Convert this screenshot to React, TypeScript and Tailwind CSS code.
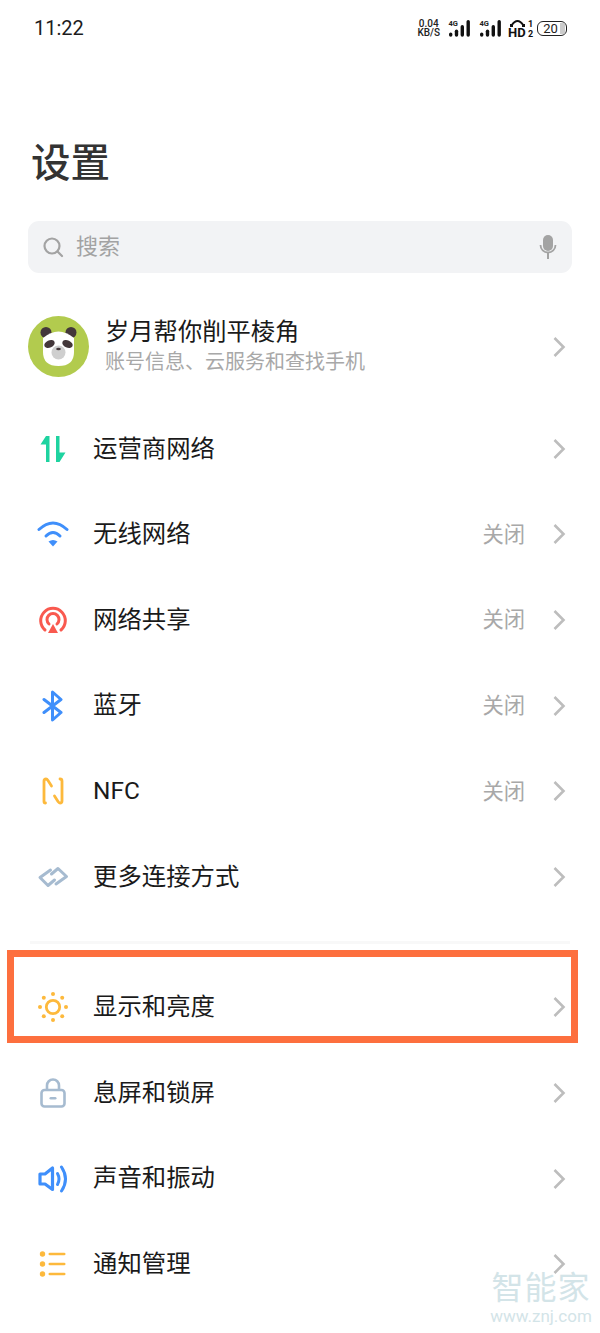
import React from "react";

const cjk = { fontFamily: '"Roboto","Noto Sans CJK SC",sans-serif' };

function Chevron() {
  return (
    <svg width="14" height="22" viewBox="0 0 14 22" fill="none" className="shrink-0">
      <path d="M2.5 2 L11.5 11 L2.5 20" stroke="#bdbdbd" strokeWidth="2.6" />
    </svg>
  );
}

function Bars() {
  return (
    <svg width="24" height="20" viewBox="0 0 24 20" className="shrink-0">
      <text x="0.5" y="8" fontSize="7.5" fontWeight="700" fontFamily="Roboto,sans-serif" fill="#222">4G</text>
      <rect x="1" y="14.5" width="3.4" height="4.2" rx="1.7" fill="#111" />
      <rect x="6.8" y="11.5" width="3.4" height="7.2" rx="1.7" fill="#111" />
      <rect x="12.6" y="7" width="3.4" height="11.7" rx="1.7" fill="#111" />
      <rect x="18.5" y="2" width="3.4" height="16.7" rx="1.7" fill="#111" />
    </svg>
  );
}

function StatusBar() {
  return (
    <div className="flex h-[56px] items-center justify-between pl-[34px] pr-[33px]">
      <span className="text-[20px] text-[#1c1c1c]" style={{ fontFamily: "Roboto,sans-serif", fontWeight: 450 }}>11:22</span>
      <div className="flex items-center" style={{ fontFamily: "Roboto,sans-serif" }}>
        <div className="mr-[8px] flex flex-col items-center text-[10px] font-medium leading-[9.5px] text-[#222]">
          <span>0.04</span>
          <span>KB/S</span>
        </div>
        <Bars />
        <div className="w-[7px]" />
        <Bars />
        <div className="w-[5px]" />
        <svg width="26" height="20" viewBox="0 0 26 20" className="shrink-0">
          <path d="M3.5 7.5 Q9.5 -1.5 15.5 7.5" fill="none" stroke="#111" strokeWidth="2" />
          <rect x="2" y="6" width="3" height="3" fill="#111" />
          <rect x="14" y="6" width="3" height="3" fill="#111" />
          <text x="0" y="18.5" fontSize="13" fontWeight="700" fontFamily="Roboto,sans-serif" fill="#111">HD</text>
          <text x="20" y="9" fontSize="9" fontWeight="700" fontFamily="Roboto,sans-serif" fill="#111">1</text>
          <text x="20" y="18.5" fontSize="9" fontWeight="700" fontFamily="Roboto,sans-serif" fill="#111">2</text>
        </svg>
        <div className="relative ml-[3px] flex h-[15px] w-[30px] items-center justify-center overflow-hidden rounded-[6px] border border-[#222] pr-[3px] text-[13px] leading-none text-[#222]">
          <div className="absolute right-[1px] top-[1px] bottom-[1px] w-[5px] bg-[#ccc]" />
          <span className="relative">20</span>
        </div>
      </div>
    </div>
  );
}

const icons: Record<string, React.ReactNode> = {
  net: (
    <svg width="30" height="30" viewBox="0 0 30 30" className="shrink-0">
      <path d="M8 2 L11.5 2 L11.5 28 L8 28 Z M8 2 L2.5 10.5 L8 10.5 Z" fill="#1ed3a0" />
      <path d="M18 2 L21.5 2 L21.5 28 L18 28 Z M21.5 28 L27.5 18.5 L21.5 18.5 Z" fill="#1ed3a0" />
    </svg>
  ),
  wifi: (
    <svg width="32" height="30" viewBox="0 0 32 30" fill="none" className="shrink-0">
      <path d="M2 10.5 Q16 -2.5 30 10.5" stroke="#3f8ffb" strokeWidth="3" strokeLinecap="round" />
      <path d="M9 17 Q16 10 23 17" stroke="#3f8ffb" strokeWidth="3" strokeLinecap="round" />
      <path d="M11.5 22.5 Q16 19.5 20.5 22.5 L16 27.5 Z" fill="#3f8ffb" />
    </svg>
  ),
  share: (
    <svg width="30" height="30" viewBox="0 0 30 30" fill="none" className="shrink-0">
      <path d="M7 25 A12.3 12.3 0 1 1 23 25" stroke="#f9594f" strokeWidth="3" strokeLinecap="round" />
      <path d="M11 19 A6 6 0 1 1 19 19" stroke="#f9594f" strokeWidth="3" strokeLinecap="round" />
      <path d="M15 19 L20 28 L10 28 Z" fill="#f9594f" />
    </svg>
  ),
  bt: (
    <svg width="30" height="32" viewBox="0 0 30 32" fill="none" className="shrink-0">
      <path d="M6 9.5 L23 22.5 L14.5 30 L14.5 2 L23 9.5 L6 22.5" stroke="#3f8ffb" strokeWidth="3" strokeLinecap="round" strokeLinejoin="round" />
    </svg>
  ),
  nfc: (
    <svg width="30" height="30" viewBox="0 0 30 30" fill="none" className="shrink-0">
      <path d="M7.5 27 Q6 27 6 25.5 L6 5 Q6 3 8 3 Q9 3 10 4.5 L13.5 10" stroke="#fdb93c" strokeWidth="2.8" strokeLinecap="round" strokeLinejoin="round" />
      <path d="M22 3 Q24 3 24 5 L24 25 Q24 27 22 27 Q21 27 20 25.5 L16.5 20" stroke="#fdb93c" strokeWidth="2.8" strokeLinecap="round" strokeLinejoin="round" />
    </svg>
  ),
  link: (
    <svg width="32" height="30" viewBox="0 0 32 30" fill="none" className="shrink-0">
      <path d="M13.5 8 L3 15.5 L11 23.5 L17.5 18" stroke="#a6bbd0" strokeWidth="3" strokeLinecap="round" strokeLinejoin="round" />
      <path d="M14.5 12 L21 6.5 L29.5 14.5 L19 22" stroke="#a6bbd0" strokeWidth="3" strokeLinecap="round" strokeLinejoin="round" />
    </svg>
  ),
  sun: (
    <svg width="30" height="30" viewBox="0 0 30 30" fill="none" className="shrink-0">
      <circle cx="15" cy="15" r="6.7" stroke="#fdb93c" strokeWidth="2.8" />
      {[
        [15, 2],
        [15, 28],
        [2, 15],
        [28, 15],
        [5.8, 5.8],
        [24.2, 5.8],
        [5.8, 24.2],
        [24.2, 24.2],
      ].map(([x, y], i) => (
        <circle key={i} cx={x} cy={y} r="2" fill="#fdb93c" />
      ))}
    </svg>
  ),
  lock: (
    <svg width="30" height="32" viewBox="0 0 30 32" fill="none" className="shrink-0">
      <path d="M9 13 L9 8.5 A6 6 0 0 1 21 8.5 L21 13" stroke="#a6bbd0" strokeWidth="2.6" />
      <rect x="3.5" y="13" width="23" height="16.5" rx="3" stroke="#a6bbd0" strokeWidth="2.6" />
      <rect x="11.5" y="20" width="7" height="2.6" rx="1.3" fill="#a6bbd0" />
    </svg>
  ),
  sound: (
    <svg width="32" height="30" viewBox="0 0 32 30" fill="none" className="shrink-0">
      <path d="M3 10 L8 10 L15.5 4 L15.5 25.5 L8 20 L3 20 Z" stroke="#3f8ffb" strokeWidth="3.2" strokeLinejoin="round" />
      <path d="M20.5 9.5 Q23.5 15 20.5 20.5" stroke="#3f8ffb" strokeWidth="3" strokeLinecap="round" />
      <path d="M24.5 3 Q32.5 15 24.5 27" stroke="#3f8ffb" strokeWidth="3" strokeLinecap="round" />
    </svg>
  ),
  list: (
    <svg width="30" height="30" viewBox="0 0 30 30" className="shrink-0">
      {[5, 15, 25].map((y) => (
        <g key={y}>
          <circle cx="4.5" cy={y} r="2.7" fill="#fdb93c" />
          <rect x="10.5" y={y - 1.3} width="17" height="2.6" rx="1.3" fill="#fdb93c" />
        </g>
      ))}
    </svg>
  ),
};

function Row({ icon, label, value }: { icon: string; label: string; value?: string }) {
  return (
    <div className="flex h-[85.6px] items-center pl-[38px] pr-[34px]">
      <div className="flex w-[30px] shrink-0 items-center justify-center">{icons[icon]}</div>
      <span className="ml-[25px] flex-1 text-[24.4px] leading-none text-[#1a1a1a]">{label}</span>
      {value && <span className="mr-[27px] text-[21.3px] leading-none text-[#a8a8a8]">{value}</span>}
      <Chevron />
    </div>
  );
}

function Panda() {
  return (
    <svg width="61" height="61" viewBox="0 0 61 61" className="shrink-0">
      <circle cx="30.5" cy="30.5" r="30.5" fill="#b2cb4e" />
      <circle cx="18" cy="16.5" r="5.5" fill="#43373a" />
      <circle cx="43" cy="16.5" r="5.5" fill="#43373a" />
      <path d="M15 22 Q30.5 9 46 22 L46 36 Q46 50 30.5 50 Q15 50 15 36 Z" fill="#fff" />
      <ellipse cx="21.5" cy="28" rx="5.5" ry="3.6" transform="rotate(-25 21.5 28)" fill="#43373a" />
      <ellipse cx="39.5" cy="28" rx="5.5" ry="3.6" transform="rotate(25 39.5 28)" fill="#43373a" />
      <circle cx="30.5" cy="36.5" r="7" fill="#cfcfcf" />
      <ellipse cx="30.5" cy="33" rx="2.3" ry="1.2" fill="#43373a" />
    </svg>
  );
}

export default function App() {
  return (
    <div className="relative h-[1333px] w-[600px] overflow-hidden bg-white" style={cjk}>
      <StatusBar />
      <h1 className="ml-[31px] mt-[85px] text-[39.5px] font-medium leading-[46px] text-[#333333]">设置</h1>

      <div className="mx-[28px] mt-[34px] flex h-[52px] items-center rounded-[11px] bg-[#f2f3f5] pl-[14px] pr-[15px]">
        <svg width="22" height="22" viewBox="0 0 22 22" fill="none" className="shrink-0">
          <circle cx="10" cy="10" r="7.5" stroke="#a3a3a3" strokeWidth="2.2" />
          <path d="M15.5 15.5 L20 20" stroke="#a3a3a3" strokeWidth="2.2" strokeLinecap="round" />
        </svg>
        <span className="ml-[12px] flex-1 text-[22px] leading-none text-[#a3a3a3]">搜索</span>
        <svg width="18" height="26" viewBox="0 0 18 26" fill="none" className="shrink-0">
          <rect x="4" y="1" width="10" height="16" rx="5" fill="#a3a3a3" />
          <path d="M1.5 11 A7.5 7.5 0 0 0 16.5 11" stroke="#a3a3a3" strokeWidth="1.8" />
          <path d="M9 19 L9 25" stroke="#a3a3a3" strokeWidth="2" />
        </svg>
      </div>

      <div className="mt-[43px] flex h-[61px] items-center pl-[28px] pr-[34px]">
        <Panda />
        <div className="ml-[16px] flex flex-1 flex-col">
          <span className="text-[24.3px] leading-[30px] text-[#1a1a1a]">岁月帮你削平棱角</span>
          <span className="mt-[1px] text-[20px] leading-[28px] text-[#a8a8a8]">账号信息、云服务和查找手机</span>
        </div>
        <Chevron />
      </div>

      <div className="mt-[29px]">
        <Row icon="net" label="运营商网络" />
        <Row icon="wifi" label="无线网络" value="关闭" />
        <Row icon="share" label="网络共享" value="关闭" />
        <Row icon="bt" label="蓝牙" value="关闭" />
        <Row icon="nfc" label="NFC" value="关闭" />
        <Row icon="link" label="更多连接方式" />
      </div>

      <div className="mx-[30px] mt-[21px] h-[3px] bg-[#f8f8f8]" />

      <div className="mt-[21px]">
        <div className="relative">
          <Row icon="sun" label="显示和亮度" />
          <div className="absolute left-[7px] top-[-15px] h-[93px] w-[571px] border-[7px] border-[#fd6f3e]" />
        </div>
        <Row icon="lock" label="息屏和锁屏" />
        <Row icon="sound" label="声音和振动" />
        <Row icon="list" label="通知管理" />
      </div>

      <div className="absolute left-[490px] top-[1270px] flex w-[102px] flex-col items-center text-[#d3e4e8]">
        <span className="text-[32px] leading-[36px] tracking-[1px]">智能家</span>
        <span className="text-[17px] leading-[20px]" style={{ fontFamily: "Roboto,sans-serif" }}>www.znj.com</span>
      </div>
    </div>
  );
}
